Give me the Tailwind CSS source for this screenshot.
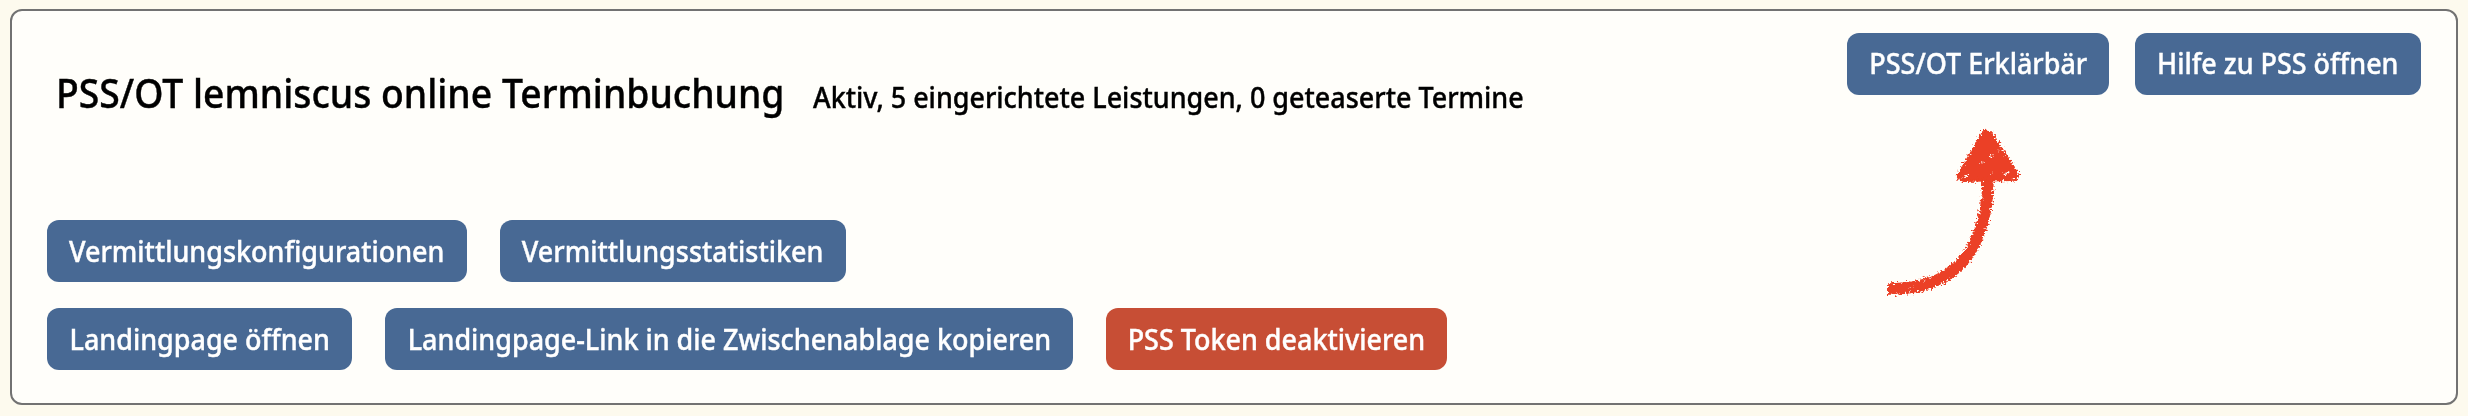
<!DOCTYPE html>
<html lang="de">
<head>
  <meta charset="UTF-8" />
  <meta name="viewport" content="width=device-width, initial-scale=1.0" />
  <title>PSS/OT lemniscus online Terminbuchung</title>
  <script src="https://cdn.jsdelivr.net/npm/@tailwindcss/browser@4"></script>
</head>
<body class="h-[416px] overflow-hidden bg-[#fdfaee] px-[10px] pt-[9px] font-['Noto_Sans',sans-serif] text-[28.5px] font-medium text-black [-webkit-text-stroke-width:0.4px]">
  <section class="relative flex h-[396px] flex-col rounded-xl border-2 border-[#727272] bg-[#fffefa] pl-[35px] pr-[35px] pt-[22px]">
    <header class="flex h-[187px] items-start justify-between">
      <div class="flex items-baseline pl-[9px] pt-[33px] whitespace-nowrap">
        <h1 class="w-[757px] origin-left scale-x-[.933] text-[40px] leading-[54px]">PSS/OT lemniscus online Terminbuchung</h1>
        <p class="origin-left scale-x-[.945]">Aktiv, 5 eingerichtete Leistungen, 0 geteaserte Termine</p>
      </div>
      <div class="flex gap-[26px] text-white whitespace-nowrap">
        <button class="flex h-[62px] w-[262px] items-center justify-center rounded-xl bg-[#486994] pb-[2px]"><span class="scale-x-[.945]">PSS/OT Erklärbär</span></button>
        <button class="flex h-[62px] w-[286px] items-center justify-center rounded-xl bg-[#486994] pb-[2px]"><span class="scale-x-[.945]">Hilfe zu PSS öffnen</span></button>
      </div>
    </header>

    <div class="flex flex-col gap-[26px] text-white whitespace-nowrap">
      <div class="flex gap-[33px]">
        <button class="flex h-[62px] w-[420px] items-center justify-center rounded-xl bg-[#486994]"><span class="scale-x-[.945]">Vermittlungskonfigurationen</span></button>
        <button class="flex h-[62px] w-[346px] items-center justify-center rounded-xl bg-[#486994]"><span class="scale-x-[.945]">Vermittlungsstatistiken</span></button>
      </div>
      <div class="flex gap-[33px]">
        <button class="flex h-[62px] w-[305px] items-center justify-center rounded-xl bg-[#486994]"><span class="scale-x-[.945]">Landingpage öffnen</span></button>
        <button class="flex h-[62px] w-[688px] items-center justify-center rounded-xl bg-[#486994]"><span class="scale-x-[.945]">Landingpage-Link in die Zwischenablage kopieren</span></button>
        <button class="flex h-[62px] w-[341px] items-center justify-center rounded-xl bg-[#c74e35]"><span class="scale-x-[.945]">PSS Token deaktivieren</span></button>
      </div>
    </div>

    <!-- Crayon arrow pointing at the Erklärbär button -->
    <svg class="absolute left-[1849px] top-[99px] h-[200px] w-[190px]" viewBox="0 0 190 200" fill="none">
      <defs>
        <filter id="crayon" x="0" y="0" width="190" height="200" filterUnits="userSpaceOnUse">
          <feTurbulence type="fractalNoise" baseFrequency="0.5" numOctaves="2" seed="4" result="noise" />
          <feDisplacementMap in="SourceGraphic" in2="noise" scale="9" xChannelSelector="R" yChannelSelector="G" />
        </filter>
      </defs>
      <g filter="url(#crayon)">
        <path d="M127 68C127 88 124 110 116 128C107 150 92 164 72 172C58 177 42 179 27 179" stroke="#eb4025" stroke-width="11.500" />
        <path d="M122 22Q127 19 131 24L143 42L157 64Q158 70 151 70L103 71Q94 69 98 63L111 41Z" fill="#eb4025" stroke="#eb4025" stroke-width="2" />
        <path d="M102.500 67L106 65.500M144.500 64L148 62M129 46.500H130.500" stroke="#fffefa" stroke-width="2" stroke-linecap="round" />
        <path d="M122 86V88M119 103V104M113 121L112 122M101 142L100 143M84 158L83 159M64 171H63M50 178H49M138 40V41M121 52V53M131 62V63" stroke="#fffefa" stroke-width="1.200" stroke-linecap="round" />
      </g>
    </svg>
  </section>
</body>
</html>
